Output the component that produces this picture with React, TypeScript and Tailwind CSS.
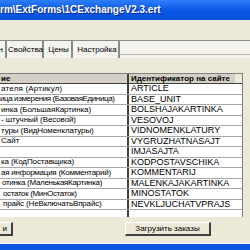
import React from "react";

const rows: [string, string, number, number][] = [
  ["ателя (Артикул)", "ARTICLE", 1, 0.2],
  ["ица измерения (БазоваяЕдиница)", "BASE_UNIT", 0, -0.4],
  ["инка (БольшаяКартинка)", "BOLSHAJAKARTINKA", 1, -0.1],
  ["- штучный (Весовой)", "VESOVOJ", 1, -0.1],
  ["туры (ВидНоменклатуры)", "VIDNOMENKLATURY", 1, -0.1],
  ["Сайт", "VYGRUZHATNASAJT", 1, 0],
  ["", "IMJASAJTA", 1, 0],
  ["ка (КодПоставщика)", "KODPOSTAVSCHIKA", 1, -0.1],
  ["ая информация (Комментарий)", "KOMMENTARIJ", 1, -0.25],
  ["отинка (МаленькаяКартинка)", "MALENKAJAKARTINKA", 2, -0.3],
  ["остаток (МинОстаток)", "MINOSTATOK", 3, -0.35],
  ["прайс (НеВключатьВпрайс)", "NEVKLJUCHATVPRAJS", 3, -0.15],
  ["", "", 1, 0],
];

export default function App() {
  return (
    <div className="w-[250px] h-[250px] overflow-hidden bg-[#ece9d8] flex flex-col font-['Liberation_Sans',Arial,sans-serif] text-black">
      {/* title bar */}
      <div className="h-[20px] shrink-0 bg-gradient-to-b from-[#2e7dfa] via-[#0a58e6] to-[#0752dc] flex items-center">
        <span className="text-white font-bold text-[10px] leading-none whitespace-nowrap [text-shadow:1px_1px_0_#0a2a90]">
          rm\ExtForms\1CExchangeV2.3.ert
        </span>
      </div>
      {/* toolbar area */}
      <div className="h-[20px] shrink-0" />
      {/* tabs */}
      <div className="h-[18px] shrink-0 border-t border-[#8a8a8a] bg-[#f3f2ec] flex items-stretch text-[8px] leading-none">
        <div className="w-[7px] border-r-2 border-[#8a8a8a] flex items-center justify-end pr-[2px]">
          <span>н</span>
        </div>
        <div className="ml-[1px] w-[36px] border-l border-white border-r-2 border-r-[#8a8a8a] flex items-center justify-center">
          Свойства
        </div>
        <div className="ml-[1px] w-[28px] border-l border-white border-r-2 border-r-[#8a8a8a] flex items-center justify-center">
          Цены
        </div>
        <div className="ml-[2px] w-[45px] border-l border-white border-r-2 border-r-[#8a8a8a] flex items-center justify-center">
          Настройка
        </div>
        <div className="flex-1 border-b border-[#b8b6a8] mb-[3px]" />
      </div>
      {/* spacer */}
      <div className="h-[15px] shrink-0" />
      {/* table */}
      <div className="h-[144px] shrink-0 w-[243px] overflow-hidden border-r border-[#808080] text-[8px] leading-none">
        <div className="h-[11px] flex bg-[#d4d0c8] border-t border-[#808080] border-b border-b-[#404040] font-bold">
          <div className="w-[127px] flex items-center pl-[1px]">ие</div>
          <div className="w-[2px] bg-[#404040]" />
          <div className="w-[106px] flex items-center pl-[2px] whitespace-nowrap">Идентификатор на сайте</div>
          <div className="flex-1 bg-[#ece9d8]" />
        </div>
        {rows.map(([l, r, pad, ls], i) => (
          <div key={i} className="h-[10.5px] flex bg-white border-b border-[#a8a8a8]">
            <div
              className="w-[127px] flex items-center whitespace-nowrap overflow-hidden text-[8px]"
              style={{ paddingLeft: pad, letterSpacing: ls }}
            >
              {l}
            </div>
            <div className="w-[2px] bg-[#404040]" />
            <div className="flex-1 flex items-center pl-[2px] whitespace-nowrap text-[9px]">{r}</div>
          </div>
        ))}
      </div>
      {/* buttons */}
      <div className="h-[5px] shrink-0" />
      <div className="h-[14px] shrink-0 flex text-[8px] leading-none">
        <div className="w-[13px] border-t border-white border-r-2 border-r-[#404040] border-b-2 border-b-[#404040] bg-[#ece9d8] flex items-center justify-end pr-[4px]">
          и
        </div>
        <div className="ml-[112px] w-[86px] border-t border-l border-white border-r-2 border-r-[#404040] border-b-2 border-b-[#404040] bg-[#ece9d8] flex items-center justify-center">
          Загрузить заказы
        </div>
      </div>
      <div className="h-[8px] shrink-0 border-b border-white" />
      <div className="flex-1 bg-[#0c58e0]" />
    </div>
  );
}
